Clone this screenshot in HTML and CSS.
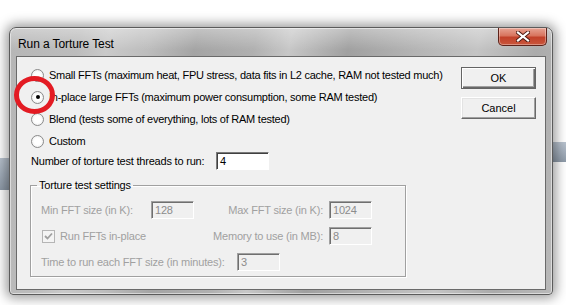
FILE: index.html
```html
<!DOCTYPE html>
<html lang="en">
<head>
    <meta charset="UTF-8">
    <title>Run a Torture Test</title>
    <link rel="stylesheet" href="styles.css">
</head>
<body>
    <div class="desk">
        <div class="behind behind-left"></div>
        <div class="behind behind-right"></div>

        <div class="window">
            <div class="titlebar">
                <span class="title">Run a Torture Test</span>
                <div class="close">
                    <svg width="14" height="11" viewBox="0 0 14 11">
                        <path d="M2 1.5 L12 9.5 M12 1.5 L2 9.5" stroke="#4a1810" stroke-width="4" stroke-linecap="square"/>
                        <path d="M2 1.5 L12 9.5 M12 1.5 L2 9.5" stroke="#ffffff" stroke-width="2.2" stroke-linecap="square"/>
                    </svg>
                </div>
            </div>

            <div class="client">
                <div class="top">
                    <div class="options">
                        <label class="radio"><span class="bullet"></span>Small FFTs (maximum heat, FPU stress, data fits in L2 cache, RAM not tested much)</label>
                        <label class="radio"><span class="bullet on"></span>In-place large FFTs (maximum power consumption, some RAM tested)</label>
                        <label class="radio"><span class="bullet"></span>Blend (tests some of everything, lots of RAM tested)</label>
                        <label class="radio"><span class="bullet"></span>Custom</label>
                    </div>
                    <div class="buttons">
                        <button class="btn btn-default">OK</button>
                        <button class="btn">Cancel</button>
                    </div>
                </div>

                <div class="threads">
                    <span class="threads-label">Number of torture test threads to run:</span>
                    <span class="field field-on">4</span>
                </div>

                <fieldset class="group">
                    <legend>Torture test settings</legend>
                    <div class="row">
                        <span class="lbl w-min">Min FFT size (in K):</span>
                        <span class="field field-off">128</span>
                        <span class="lbl lbl-right">Max FFT size (in K):</span>
                        <span class="field field-off">1024</span>
                    </div>
                    <div class="row">
                        <span class="lbl w-check"><span class="check">
                            <svg width="9" height="9" viewBox="0 0 9 9"><path d="M1 4 L3.5 6.5 L8 1.5" stroke="#a0a0a0" stroke-width="1.8" fill="none"/></svg>
                        </span>Run FFTs in-place</span>
                        <span class="lbl lbl-right">Memory to use (in MB):</span>
                        <span class="field field-off">8</span>
                    </div>
                    <div class="row">
                        <span class="lbl w-time">Time to run each FFT size (in minutes):</span>
                        <span class="field field-off">3</span>
                    </div>
                </fieldset>
            </div>
        </div>

        <div class="marker"></div>
    </div>
</body>
</html>
```

FILE: styles.css
```css
body { margin: 0; background: #ffffff; font-family: "Liberation Sans", Arial, sans-serif; }
.desk { position: relative; width: 566px; height: 305px; overflow: hidden; background: #ffffff; }

/* windows behind the dialog */
.behind { position: absolute; background: linear-gradient(#b9c3cf, #8e9aa8); }
.behind-left { left: 0; top: 158px; width: 12px; height: 32px; }
.behind-right { left: 548px; top: 142px; width: 18px; height: 20px; }

.window {
    position: absolute; left: 9px; top: 27px; width: 544px; height: 268px;
    box-sizing: border-box; padding: 0 6px 5px 6px;
    border: 1px solid #5b5b5b; border-radius: 7px 7px 4px 4px;
    background:
        linear-gradient(to bottom, rgba(255,255,255,0.35), rgba(255,255,255,0) 22px),
        linear-gradient(100deg, #b6b6b6 0%, #bcbcbc 12%, #c9c9c9 17%, #bdbdbd 24%, #a4a4a4 32%, #b0b0b0 42%, #c7c7c7 48%, #a0a0a0 58%, #b5b5b5 70%, #c4c4c4 80%, #ababab 90%, #b9b9b9 100%);
    box-shadow: 0 0 12px 3px rgba(0,0,0,0.4), inset 0 0 0 1px rgba(255,255,255,0.5);
}

.titlebar { height: 28px; display: flex; align-items: flex-start; justify-content: space-between; }
.title { margin: 9px 0 0 2px; font-size: 12px; color: #000; letter-spacing: -0.1px; }

.close {
    width: 47px; height: 17px; margin-right: -1px;
    display: flex; align-items: center; justify-content: center;
    border: 1px solid #5e2219; border-top: none; border-radius: 0 0 5px 5px;
    background: linear-gradient(#e7a393 0%, #d8745e 45%, #c2412a 55%, #c9563c 100%);
    box-shadow: inset 0 0 0 1px rgba(255,255,255,0.35);
}

.client {
    height: 234px; box-sizing: border-box;
    border: 1px solid #6a6a6a; background: #f0f0f0;
    padding: 7px 0 0 14px; font-size: 11px; color: #000;
}

.top { display: flex; }
.options { width: 430px; }
.radio { height: 22px; display: flex; align-items: center; white-space: nowrap; letter-spacing: -0.25px; }
.bullet {
    width: 11px; height: 11px; margin-right: 5px; border-radius: 50%;
    border: 1px solid #8a8a8a; background: radial-gradient(#ffffff 40%, #e6e6e6);
    display: flex; align-items: center; justify-content: center; flex: none;
}
.bullet.on::after { content: ""; width: 4px; height: 4px; border-radius: 50%; background: #000; }

.buttons { display: flex; flex-direction: column; gap: 8px; margin-top: 3px; }
.btn {
    width: 75px; height: 22px; padding: 0; background: #f0f0f0;
    font-family: inherit; font-size: 11px; color: #000;
    border: 1px solid; border-color: #ffffff #696969 #696969 #ffffff;
    box-shadow: inset -1px -1px 0 #a0a0a0, inset 1px 1px 0 #e3e3e3;
}
.btn-default { border-color: #646464; box-shadow: inset 1px 1px 0 #ffffff, inset -1px -1px 0 #696969, inset -2px -2px 0 #a0a0a0; }

.threads { display: flex; align-items: center; height: 18px; margin-top: 0; }
.threads-label { width: 185px; letter-spacing: -0.2px; }

.field {
    box-sizing: border-box; height: 18px; padding: 1px 0 0 3px;
    border: 1px solid; border-color: #7a7a7a #ffffff #ffffff #7a7a7a;
    box-shadow: inset 1px 1px 0 #404040; line-height: 15px;
}
.field-on { width: 53px; background: #ffffff; }
.field-off { width: 43px; background: #f0f0f0; color: #8c8c8c; border-color: #a0a0a0 #ffffff #ffffff #a0a0a0; box-shadow: inset 1px 1px 0 #6f6f6f; }

.group {
    width: 376px; height: 98px; box-sizing: border-box;
    margin: 9px 0 0 -1px; padding: 9px 0 0 10px;
    border: 1px solid #a0a0a0; box-shadow: 1px 1px 0 #ffffff, inset 1px 1px 0 #ffffff;
}
.group legend { padding: 0 2px; margin-left: -4px; line-height: 13px; color: #000; letter-spacing: -0.2px; }

.row { display: flex; align-items: center; height: 18px; margin-bottom: 8px; color: #a0a0a0; letter-spacing: -0.2px; white-space: nowrap; }
.lbl { display: flex; align-items: center; }
.w-min { width: 110px; }
.w-check { width: 153px; }
.w-time { width: 196px; }
.lbl-right { width: 129px; justify-content: flex-end; margin-right: 6px; }

.check {
    width: 11px; height: 11px; margin: 0 5px 0 1px; flex: none;
    border: 1px solid #b5b5b5; background: #f4f4f4;
    display: flex; align-items: center; justify-content: center;
}

/* red highlight drawn over the dialog */
.marker {
    position: absolute; left: 14px; top: 76px; width: 41px; height: 38px;
    box-sizing: border-box; border: 5px solid #e31b23; border-radius: 50%;
}
```
